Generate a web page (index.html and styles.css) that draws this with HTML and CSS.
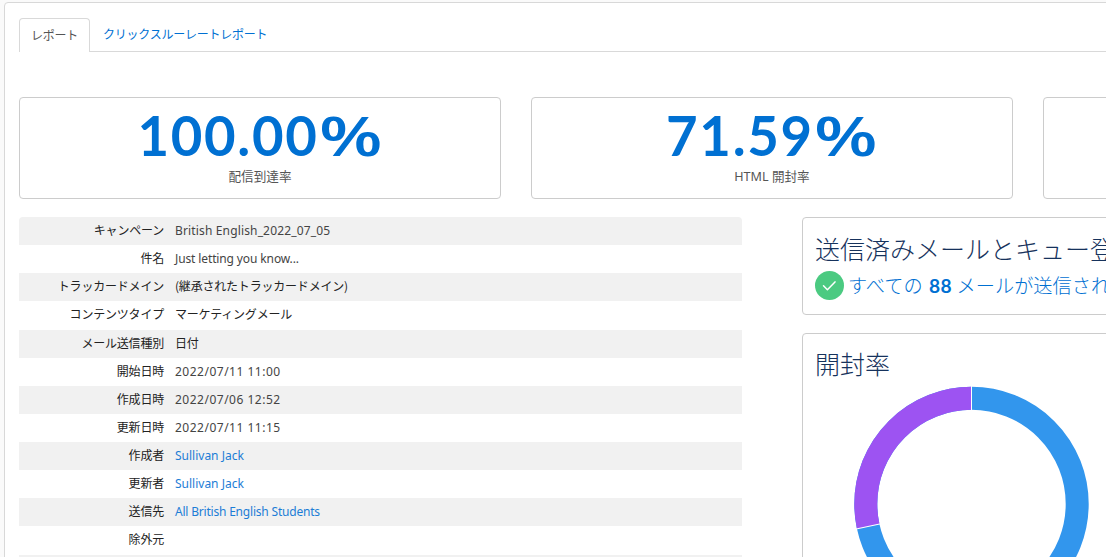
FILE: index.html
```
<!DOCTYPE html>
<html lang="ja">
<head>
  <meta charset="UTF-8">
  <meta name="viewport" content="width=device-width, initial-scale=1.0">
  <title>レポート</title>
  <link rel="stylesheet" href="styles.css">
</head>
<body>
  <div class="panel">
    <ul class="tabs">
      <li class="tab active">レポート</li>
      <li class="tab"><a href="#">クリックスルーレートレポート</a></li>
    </ul>

    <div class="stats">
      <div class="stat">
        <div class="stat-value">100.00<span class="percent">%</span></div>
        <div class="stat-label">配信到達率</div>
      </div>
      <div class="stat">
        <div class="stat-value">71.59<span class="percent">%</span></div>
        <div class="stat-label">HTML 開封率</div>
      </div>
      <div class="stat"></div>
    </div>

    <div class="content">
      <dl class="details">
        <div class="row"><dt>キャンペーン</dt><dd class="latin campaign">British English_2022_07_05</dd></div>
        <div class="row"><dt>件名</dt><dd class="latin subject">Just letting you know...</dd></div>
        <div class="row"><dt>トラッカードメイン</dt><dd>(継承されたトラッカードメイン)</dd></div>
        <div class="row"><dt>コンテンツタイプ</dt><dd>マーケティングメール</dd></div>
        <div class="row"><dt>メール送信種別</dt><dd>日付</dd></div>
        <div class="row"><dt>開始日時</dt><dd class="latin date">2022/07/11 11:00</dd></div>
        <div class="row"><dt>作成日時</dt><dd class="latin date">2022/07/06 12:52</dd></div>
        <div class="row"><dt>更新日時</dt><dd class="latin date">2022/07/11 11:15</dd></div>
        <div class="row"><dt>作成者</dt><dd class="latin"><a href="#">Sullivan Jack</a></dd></div>
        <div class="row"><dt>更新者</dt><dd class="latin"><a href="#">Sullivan Jack</a></dd></div>
        <div class="row"><dt>送信先</dt><dd class="latin list"><a href="#">All British English Students</a></dd></div>
        <div class="row"><dt>除外元</dt><dd></dd></div>
        <div class="row"><dt></dt><dd></dd></div>
      </dl>

      <div class="cards">
        <div class="card queue">
          <h2>送信済みメールとキュー登録済みメール</h2>
          <p class="sent">
            <svg class="check" viewBox="0 0 29 29" width="29" height="29">
              <circle cx="14.5" cy="14.5" r="14.5" fill="#4bca81"/>
              <path d="M8.5 14.8l3.9 3.9 7.6-7.8" fill="none" stroke="#fff" stroke-width="1.5" stroke-linecap="round" stroke-linejoin="round"/>
            </svg>
            <span>すべての <b>88</b> メールが送信されました</span>
          </p>
        </div>
        <div class="card open-rate">
          <h2>開封率</h2>
          <svg class="donut" viewBox="0 0 236 236" width="236" height="236">
            <g fill="none" stroke-width="23" transform="rotate(-90 118.5 118)">
              <circle cx="118.5" cy="118" r="105.7" stroke="#3296ed"/>
              <circle cx="118.5" cy="118" r="105.7" stroke="#9d53f2" pathLength="100" stroke-dasharray="28.41 71.59" stroke-dashoffset="-71.59"/>
            </g>
            <!-- separators between the slices -->
            <g stroke="#fff" stroke-width="1">
              <path d="M118.5 0v36"/>
              <path d="M118.5 0v36" transform="rotate(257.72 118.5 118)"/>
            </g>
          </svg>
        </div>
      </div>
    </div>
  </div>
</body>
</html>
```
FILE: styles.css
```
* {
  box-sizing: border-box;
}

body {
  margin: 0;
  height: 557px;
  overflow: hidden;
  background-color: #fafafa;
  color: #222;
  font-family: "Noto Sans", "Noto Sans CJK JP", sans-serif;
  font-size: 12px;
}

a {
  color: #0070d2;
  text-decoration: none;
}

.panel {
  width: 1540px;
  height: 700px;
  margin: 2px 0 0 4px;
  padding: 15px 14px;
  border: 1px solid #d8d8d8;
  border-radius: 4px;
  background-color: #fff;
}

.tabs {
  display: flex;
  height: 34px;
  margin: 0;
  padding: 0;
  list-style: none;
  border-bottom: 1px solid #d9d9d9;
  font-family: "Noto Sans CJK JP", sans-serif;
  letter-spacing: -0.25px;
}

.tab {
  height: 34px;
  padding: 0 13px;
  line-height: 32px;
  white-space: nowrap;
}

.tab.active {
  width: 71px;
  padding: 0 11px;
  line-height: 31px;
  border: 1px solid #d9d9d9;
  border-bottom: 0;
  border-radius: 4px 4px 0 0;
  background-color: #fff;
  color: #555;
}

.stats {
  display: flex;
  gap: 30px;
  margin-top: 45px;
}

.stat {
  width: 482px;
  height: 102px;
  padding-top: 5px;
  border: 1px solid #ccc;
  border-radius: 4px;
  text-align: center;
}

.stat-value {
  height: 64px;
  color: #0070d2;
  font-family: Lato, sans-serif;
  font-size: 54.5px;
  font-weight: 700;
  line-height: 64px;
  letter-spacing: 1.7px;
  white-space: nowrap;
}

.percent {
  display: inline-block;
  width: 64px;
  font-family: "Open Sans", sans-serif;
  font-weight: 600;
  letter-spacing: 0;
  line-height: 1;
  text-align: left;
  transform: scaleX(1.35);
  transform-origin: left;
}

.stat-label {
  margin-top: 1px;
  color: #555;
  font-size: 12.6px;
  line-height: 17px;
}

.content {
  display: flex;
  gap: 60px;
  margin-top: 18px;
}

.details {
  width: 723px;
  margin: 0;
}

.row {
  display: grid;
  grid-template-columns: 145px 1fr;
  column-gap: 11px;
  height: 28.13px;
  line-height: 26px;
}

.row:nth-child(odd) {
  background-color: #f1f1f1;
}

.row:first-child {
  border-radius: 4px 4px 0 0;
}

.row dt,
.row dd {
  margin: 0;
  font-family: "Noto Sans CJK JP", sans-serif;
  letter-spacing: -0.2px;
  white-space: nowrap;
}

.row dt {
  text-align: right;
}

.row .latin {
  color: #444;
  font-family: "Noto Sans", sans-serif;
  line-height: 28px;
  letter-spacing: 0;
}

.row .campaign {
  letter-spacing: 0.15px;
}

.row .subject {
  letter-spacing: -0.12px;
}

.row .date {
  letter-spacing: 0.5px;
}

.row .list {
  letter-spacing: -0.2px;
}

.latin a {
  color: #1c7dd6;
}

.cards {
  width: 722px;
}

.card {
  padding: 13px 12px;
  border: 1px solid #ccc;
  border-radius: 4px;
}

.card h2 {
  margin: 0;
  color: #16325c;
  font-family: "Noto Sans CJK JP", sans-serif;
  font-size: 25px;
  font-weight: 300;
  line-height: 34px;
  white-space: nowrap;
}

.queue {
  height: 98px;
}

.sent {
  display: flex;
  align-items: center;
  gap: 4px;
  margin: 6px 0 0;
  color: #0070d2;
  font-family: "Noto Sans CJK JP", sans-serif;
  font-size: 19.2px;
  font-weight: 300;
  line-height: 27px;
  white-space: nowrap;
}

.sent b {
  margin: 0 0 0 2px;
  font-family: Lato, sans-serif;
  font-weight: 700;
  letter-spacing: 0.6px;
}

.open-rate {
  height: 330px;
  margin-top: 18px;
  padding-top: 12px;
}

.donut {
  display: block;
  margin: 6px 0 0 38px;
}
```
